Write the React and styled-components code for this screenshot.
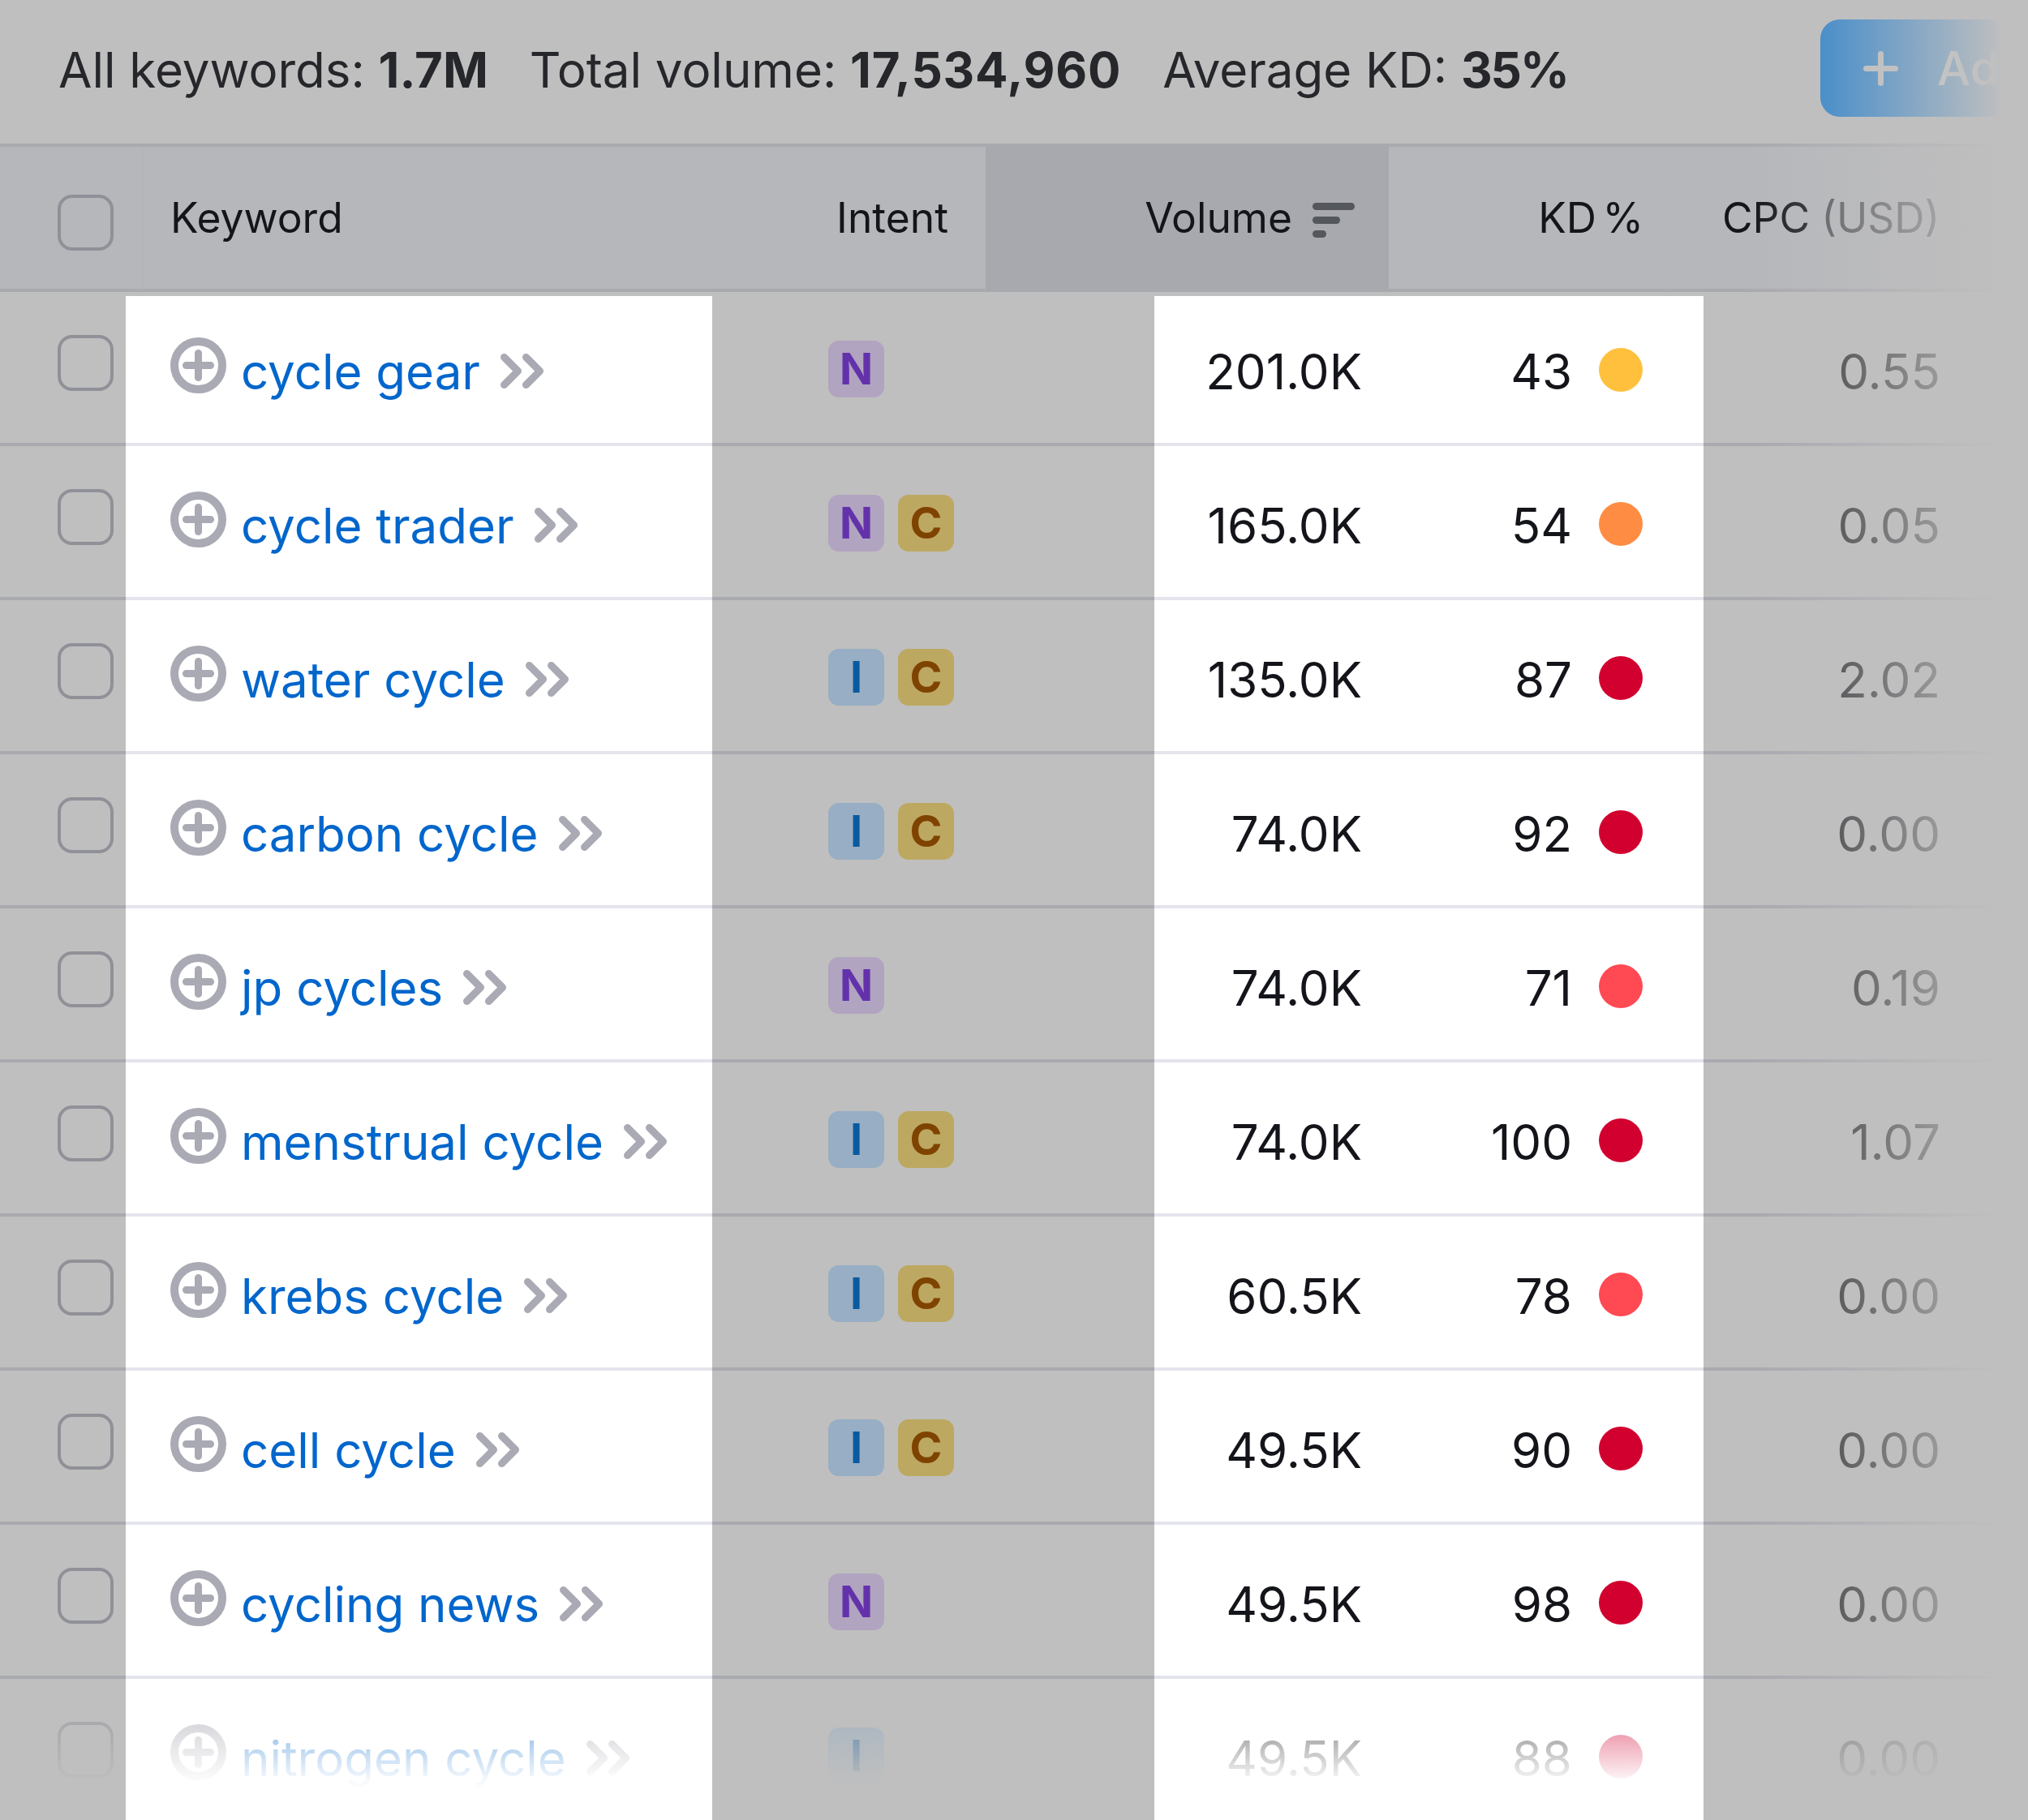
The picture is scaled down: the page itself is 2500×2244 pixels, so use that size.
import React from "react";
import styled, { createGlobalStyle } from "styled-components";

const rows = [
  { name: "cycle gear", intents: ["N"], volume: "201.0K", kd: 43, dot: "#ffc13d", cpc: "0.55" },
  { name: "cycle trader", intents: ["N", "C"], volume: "165.0K", kd: 54, dot: "#ff8c43", cpc: "0.05" },
  { name: "water cycle", intents: ["I", "C"], volume: "135.0K", kd: 87, dot: "#d1002f", cpc: "2.02" },
  { name: "carbon cycle", intents: ["I", "C"], volume: "74.0K", kd: 92, dot: "#d1002f", cpc: "0.00" },
  { name: "jp cycles", intents: ["N"], volume: "74.0K", kd: 71, dot: "#ff4953", cpc: "0.19" },
  { name: "menstrual cycle", intents: ["I", "C"], volume: "74.0K", kd: 100, dot: "#d1002f", cpc: "1.07" },
  { name: "krebs cycle", intents: ["I", "C"], volume: "60.5K", kd: 78, dot: "#ff4953", cpc: "0.00" },
  { name: "cell cycle", intents: ["I", "C"], volume: "49.5K", kd: 90, dot: "#d1002f", cpc: "0.00" },
  { name: "cycling news", intents: ["N"], volume: "49.5K", kd: 98, dot: "#d1002f", cpc: "0.00" },
  { name: "nitrogen cycle", intents: ["I"], volume: "49.5K", kd: 88, dot: "#d1002f", cpc: "0.00" },
];

const badgeColors = {
  N: { bg: "#b1a4c0", fg: "#6332ab" },
  I: { bg: "#97aec4", fg: "#0b5a9e" },
  C: { bg: "#bda862", fg: "#7f4300" },
};

const AddIcon = () => (
  <AddSvg viewBox="0 0 69 69" fill="none" stroke="#a9aab3" strokeLinecap="round">
    <circle cx="34.5" cy="34.5" r="29.5" strokeWidth="10" />
    <path d="M34.5 19.5v30M19.5 34.5h30" strokeWidth="9" />
  </AddSvg>
);

const Chevrons = () => (
  <ChevronSvg viewBox="0 0 53 43" fill="none" stroke="#a9aab3" strokeWidth="9" strokeLinecap="round" strokeLinejoin="round">
    <path d="M4.5 4.5 21.5 21.5 4.5 38.5M31.5 4.5 48.5 21.5 31.5 38.5" />
  </ChevronSvg>
);

const SortIcon = () => (
  <SortSvg viewBox="0 0 52 43" fill="#54575b">
    <rect x="0" y="0" width="52" height="9" rx="4.5" />
    <rect x="0" y="17" width="34" height="9" rx="4.5" />
    <rect x="0" y="34" width="17" height="9" rx="4.5" />
  </SortSvg>
);

const App = () => {
  return (
    <Page>
      <GlobalStyle />
      <TopBar>
        <Stat>
          All keywords: <Value>1.7M</Value>
        </Stat>
        <Stat>
          Total volume: <Value $spacing="0.8px">17,534,960</Value>
        </Stat>
        <Stat>
          Average KD: <Value $spacing="-2px">35%</Value>
        </Stat>
        <AddButton>
          <PlusSign />
          Add
        </AddButton>
      </TopBar>

      <HeaderRow>
        <HeadCheck>
          <Checkbox />
        </HeadCheck>
        <HeadKeyword>
          <span>Keyword</span>
          <span>Intent</span>
        </HeadKeyword>
        <HeadVolume>
          <span>Volume</span>
          <SortIcon />
        </HeadVolume>
        <HeadKd>KD %</HeadKd>
        <HeadCpc>
          CPC <Muted>(USD)</Muted>
        </HeadCpc>
      </HeaderRow>

      {rows.map((row, i) => (
        <Row key={row.name} $first={i === 0}>
          <Cell $fade={i === rows.length - 1}>
            <Checkbox />
          </Cell>
          <KeywordCell $fade={i === rows.length - 1} $white>
            <AddIcon />
            <KeywordLink>{row.name}</KeywordLink>
            <Chevrons />
          </KeywordCell>
          <IntentCell $fade={i === rows.length - 1}>
            {row.intents.map((it) => (
              <Badge key={it} $type={it}>
                {it}
              </Badge>
            ))}
          </IntentCell>
          <NumbersCell $fade={i === rows.length - 1} $white>
            <Volume>{row.volume}</Volume>
            <Kd>{row.kd}</Kd>
            <Dot style={{ background: row.dot }} />
          </NumbersCell>
          <CpcCell $fade={i === rows.length - 1}>{row.cpc}</CpcCell>
        </Row>
      ))}

      <RightFade />
    </Page>
  );
};

export default App;

const GlobalStyle = createGlobalStyle`
  html, body {
    margin: 0;
    padding: 0;
    background: #bfbfbf;
  }
  * {
    box-sizing: border-box;
  }
`;

const Page = styled.div`
  position: relative;
  width: 2500px;
  height: 2244px;
  overflow: hidden;
  background: #bfbfbf;
  font-family: Inter, "Liberation Sans", sans-serif;
  font-size: 60px;
  color: #14151a;
`;

const TopBar = styled.div`
  height: 181px;
  padding: 0 0 6px 72px;
  display: flex;
  align-items: center;
  gap: 51px;
  border-bottom: 4px solid #a9aab0;
  white-space: nowrap;
`;

const Stat = styled.div`
  color: #26272b;
`;

const Value = styled.b`
  font-weight: 700;
  letter-spacing: ${(p) => p.$spacing || "normal"};
`;

const AddButton = styled.div`
  position: absolute;
  top: 24px;
  left: 2244px;
  width: 600px;
  height: 120px;
  padding-left: 53px;
  display: flex;
  align-items: center;
  gap: 48px;
  border-radius: 24px;
  background: #1d7cce;
  color: #d2d2d2;
  font-size: 58px;
  font-weight: 500;
`;

const PlusSign = styled.span`
  position: relative;
  flex: none;
  width: 43px;
  height: 43px;
  &::before,
  &::after {
    content: "";
    position: absolute;
    background: #c4c4c4;
    border-radius: 4px;
  }
  &::before {
    left: 0;
    right: 0;
    top: 18px;
    height: 7px;
  }
  &::after {
    top: 0;
    bottom: 0;
    left: 18px;
    width: 7px;
  }
`;

const HeaderRow = styled.div`
  height: 179px;
  display: grid;
  grid-template-columns: 176px 1039px 497px 345px 443px;
  background: #b6b7bb;
  font-size: 51.5px;
  white-space: nowrap;
`;

const HeadCheck = styled.div`
  border-bottom: 4px solid #a9aab0;
  padding: 59px 0 0 71px;
`;

const HeadKeyword = styled.div`
  border-bottom: 4px solid #a9aab0;
  padding: 0 46px 2px 33px;
  display: flex;
  align-items: center;
  justify-content: space-between;
  border-left: 1px solid #b3b4b8;
`;

const HeadVolume = styled.div`
  background: #a8a9ae;
  padding: 0 42px 6px 0;
  display: flex;
  align-items: center;
  justify-content: flex-end;
  gap: 25px;
`;

const HeadKd = styled.div`
  border-bottom: 4px solid #a9aab0;
  padding: 0 31px 2px 0;
  display: flex;
  align-items: center;
  justify-content: flex-end;
  word-spacing: -7px;
`;

const HeadCpc = styled.div`
  border-bottom: 4px solid #a9aab0;
  padding: 0 0 2px 65px;
  display: flex;
  align-items: center;
  gap: 14px;
  border-left: 1px solid #b3b4b8;
`;

const Muted = styled.span`
  color: #4a4b50;
`;

const Row = styled.div`
  display: grid;
  grid-template-columns: 155px 723px 545px 677px 400px;
  height: ${(p) => (p.$first ? "185px" : "190px")};
  margin-top: ${(p) => (p.$first ? "5px" : "0")};
  & > div {
    padding-top: ${(p) => (p.$first ? "4px" : "9px")};
  }
`;

const Cell = styled.div`
  position: relative;
  display: flex;
  align-items: center;
  padding-left: 71px;
  border-bottom: 4px solid ${(p) => (p.$white ? "#e3e4ec" : "#a9aab0")};
  background: ${(p) => (p.$white ? "#fff" : "#bfbfbf")};
  white-space: nowrap;
  &::after {
    content: "";
    display: ${(p) => (p.$fade ? "block" : "none")};
    position: absolute;
    inset: 0 0 -4px 0;
    background: ${(p) =>
      p.$white
        ? "linear-gradient(to bottom, rgba(255,255,255,0) 0, rgba(255,255,255,.55) 56px, rgba(255,255,255,.7) 81px, rgba(255,255,255,.97) 126px, #fff 140px)"
        : "linear-gradient(to bottom, rgba(191,191,191,0) 0, rgba(191,191,191,.55) 56px, rgba(191,191,191,.7) 81px, rgba(191,191,191,.97) 126px, #bfbfbf 140px)"};
  }
`;

const KeywordCell = styled(Cell)`
  padding-left: 55px;
`;

const IntentCell = styled(Cell)`
  padding-left: 143px;
  gap: 17px;
`;

const NumbersCell = styled(Cell)`
  padding-left: 0;
`;

const CpcCell = styled(Cell)`
  padding-left: 0;
  padding-right: 108px;
  justify-content: flex-end;
  color: #26272b;
`;

const Checkbox = styled.div`
  flex: none;
  width: 69px;
  height: 69px;
  border: 4px solid #909198;
  border-radius: 18px;
  margin-bottom: 21px;
  ${HeadCheck} & {
    margin-bottom: 0;
  }
`;

const AddSvg = styled.svg`
  flex: none;
  width: 69px;
  height: 69px;
  margin: 0 18px 14px 0;
`;

const ChevronSvg = styled.svg`
  flex: none;
  width: 53px;
  height: 43px;
  margin: 0 0 1px 25px;
`;

const SortSvg = styled.svg`
  flex: none;
  width: 52px;
  height: 43px;
  margin-top: 8px;
`;

const KeywordLink = styled.span`
  color: #0166cc;
`;

const Badge = styled.div`
  flex: none;
  width: 69px;
  height: 70px;
  margin-bottom: 6px;
  border-radius: 13px;
  display: flex;
  align-items: center;
  justify-content: center;
  font-size: 54px;
  font-weight: 700;
  background: ${(p) => badgeColors[p.$type].bg};
  color: ${(p) => badgeColors[p.$type].fg};
`;

const Volume = styled.span`
  width: 256px;
  text-align: right;
`;

const Kd = styled.span`
  width: 259px;
  text-align: right;
`;

const Dot = styled.span`
  width: 54px;
  height: 54px;
  margin: 0 0 4px 33px;
  border-radius: 50%;
`;

const RightFade = styled.div`
  position: absolute;
  top: 0;
  bottom: 0;
  right: 0;
  width: 344px;
  background: linear-gradient(to right, rgba(191, 191, 191, 0) 0, #bfbfbf 91%);
`;
